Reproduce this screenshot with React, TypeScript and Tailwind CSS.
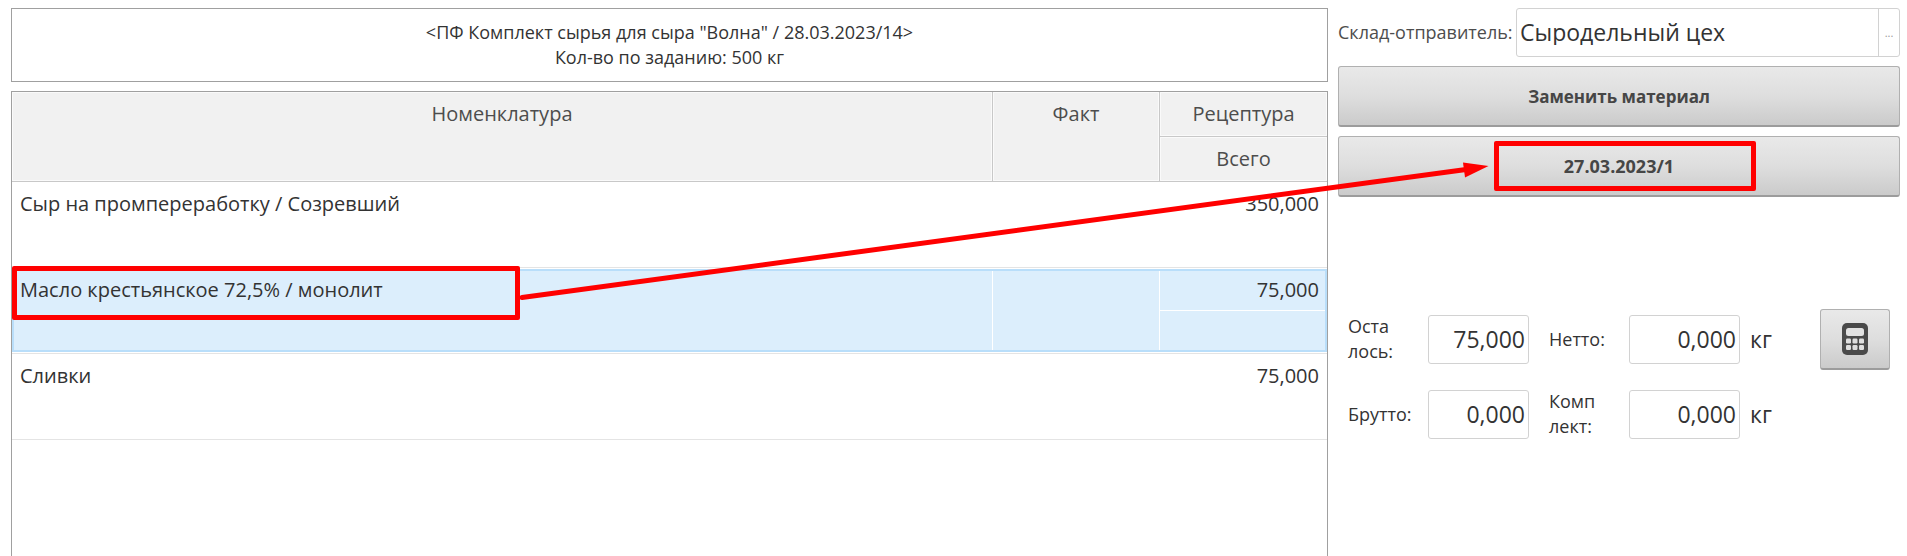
import React from "react";

type Row = { name: string; fact: string; total: string; selected?: boolean };

const rows: Row[] = [
  { name: "Сыр на промпереработку / Созревший", fact: "", total: "350,000" },
  { name: "Масло крестьянское 72,5% / монолит", fact: "", total: "75,000", selected: true },
  { name: "Сливки", fact: "", total: "75,000" },
];

const buttonStyle =
  "rounded-[3px] border border-[#b0b0b0] border-b-2 border-b-[#9c9c9c] bg-linear-to-b from-[#e9e9e9] via-[#dedede] to-[#cbcbcb] font-bold text-[#464646]";

const headCell = "border-[#c8c8c8] bg-[#f1f1f1] font-normal align-top text-center shadow-[inset_0_0_0_1px_#fafafa]";

function MaterialsTable() {
  return (
    <table className="w-full table-fixed border-separate border-spacing-0 text-[20px] leading-7">
      <colgroup>
        <col />
        <col className="w-[167px]" />
        <col className="w-[167px]" />
      </colgroup>
      <thead className="text-[#4d4d4d]">
        <tr className="h-[45px]">
          <th rowSpan={2} className={headCell + " border-r border-b pt-2"}>Номенклатура</th>
          <th rowSpan={2} className={headCell + " border-r border-b pt-2"}>Факт</th>
          <th className={headCell + " border-b pt-2"}>Рецептура</th>
        </tr>
        <tr className="h-[45px]">
          <th className={headCell + " border-b pt-2"}>Всего</th>
        </tr>
      </thead>
      <tbody className="text-[#333333]">
        {rows.map((row) =>
          row.selected ? (
            <tr key={row.name} className="h-[86px]">
              <td colSpan={3} className="relative border-b border-[#e4e4e4] p-0 align-top">
                <div className="my-px grid h-[83px] grid-cols-[minmax(0,1fr)_167px_165px] border-2 border-[#b9defa] bg-[#dceefc]">
                  <div className="border-r border-white px-1.5 pt-[5px]">{row.name}</div>
                  <div className="border-r border-white px-1.5 pt-[5px]">{row.fact}</div>
                  <div className="grid grid-rows-2 divide-y divide-white text-right">
                    <div className="px-1.5 pt-[5px]">{row.total}</div>
                    <div />
                  </div>
                </div>
                <div className="pointer-events-none absolute -top-0.5 left-0 h-[54px] w-[508px] rounded-[2px] border-5 border-[#ff0000]" />
              </td>
            </tr>
          ) : (
            <tr key={row.name} className="h-[86px]">
              <td className="border-b border-[#e4e4e4] px-2 pt-2 align-top">{row.name}</td>
              <td className="border-b border-[#e4e4e4] px-2 pt-2 align-top">{row.fact}</td>
              <td className="border-b border-[#e4e4e4] px-2 pt-2 text-right align-top">{row.total}</td>
            </tr>
          )
        )}
      </tbody>
    </table>
  );
}

function Quantity({ id, value, className }: { id: string; value: string; className: string }) {
  return (
    <input
      id={id}
      defaultValue={value}
      className={"h-[49px] rounded-[3px] border border-[#d2d2d2] bg-white px-[3px] text-right text-[23px] text-[#333333] " + className}
    />
  );
}

function CalculatorIcon() {
  return (
    <svg width="26" height="32" viewBox="0 0 26 32" aria-hidden="true">
      <rect width="26" height="32" rx="5" fill="#4a4a4a" />
      <rect x="4" y="5" width="18" height="8" rx="2.5" fill="#e2e2e2" />
      {[4, 10.5, 17].map((x) =>
        [15.5, 22].map((y) => <rect key={x + "-" + y} x={x} y={y} width="5" height="5" rx="1.2" fill="#dedede" />)
      )}
    </svg>
  );
}

function PointerArrow() {
  return (
    <svg
      className="pointer-events-none absolute top-[150px] left-[510px]"
      width="990"
      height="160"
      viewBox="510 150 990 160"
      aria-hidden="true"
    >
      <line x1="522" y1="297.5" x2="1466" y2="169.5" stroke="#ff0000" strokeWidth="5" strokeLinecap="round" />
      <polygon points="1463,162.5 1488.5,166 1465,177.5" fill="#ff0000" />
    </svg>
  );
}

export default function App() {
  return (
    <div className="relative flex min-h-screen gap-2.5 overflow-hidden bg-white pt-2 pr-[7px] pl-[11px] font-['Open_Sans','Noto_Sans',sans-serif] text-[18px] leading-[25px] text-[#333333]">
      <main className="flex min-w-0 flex-1 flex-col gap-[9px]">
        <header className="flex h-[74px] flex-col items-center justify-center border border-[#a0a0a0] text-center">
          <p>&lt;ПФ Комплект сырья для сыра "Волна" / 28.03.2023/14&gt;</p>
          <p>Кол-во по заданию: 500 кг</p>
        </header>
        <section className="flex-1 border border-b-0 border-[#a0a0a0]">
          <MaterialsTable />
        </section>
      </main>

      <aside className="flex w-[562px] flex-none flex-col">
        <div className="flex h-[49px] items-center justify-between">
          <label htmlFor="warehouse" className="text-[#4d4d4d]">Склад-отправитель:</label>
          <div className="flex h-full w-[384px] rounded-[3px] border border-[#d2d2d2]">
            <input id="warehouse" defaultValue="Сыродельный цех" className="min-w-0 flex-1 px-[3px] text-[23px]" />
            <button className="w-[21px] border-l border-[#d2d2d2] text-[11px] text-[#999999]" aria-label="Выбрать склад">...</button>
          </div>
        </div>
        <button className={"mt-[9px] h-[61px] text-[17px] " + buttonStyle}>Заменить материал</button>
        <button className={"relative mt-[9px] h-[61px] text-[18px] " + buttonStyle}>
          27.03.2023/1
          <span className="pointer-events-none absolute top-1 left-[155px] h-[50px] w-[262px] rounded-[2px] border-5 border-[#ff0000]" />
        </button>

        <div className="mt-[112px] flex items-start justify-between px-2.5">
          <div className="grid grid-cols-[80px_101px_20px_80px_111px_auto] items-center gap-y-[25px] pt-[5px]">
            <label htmlFor="left">Оста<br />лось:</label>
            <Quantity id="left" value="75,000" className="w-[101px]" />
            <span />
            <label htmlFor="net">Нетто:</label>
            <Quantity id="net" value="0,000" className="w-[111px]" />
            <span className="pl-2.5 text-[23px]">кг</span>

            <label htmlFor="gross">Брутто:</label>
            <Quantity id="gross" value="0,000" className="w-[101px]" />
            <span />
            <label htmlFor="set">Комп<br />лект:</label>
            <Quantity id="set" value="0,000" className="w-[111px]" />
            <span className="pl-2.5 text-[23px]">кг</span>
          </div>
          <button className={"flex h-[61px] w-[70px] items-center justify-center " + buttonStyle} aria-label="Калькулятор">
            <CalculatorIcon />
          </button>
        </div>
      </aside>

      <PointerArrow />
    </div>
  );
}
